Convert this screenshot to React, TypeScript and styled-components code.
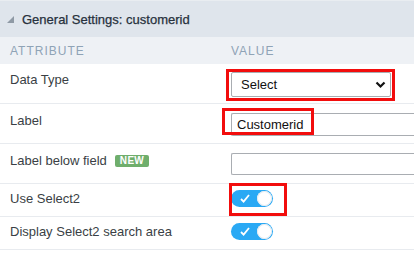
import React from 'react'
import styled, { createGlobalStyle } from 'styled-components'

const GlobalStyle = createGlobalStyle`
  html, body {
    margin: 0;
    padding: 0;
    background: #ffffff;
  }
  body {
    font-family: "Liberation Sans", Arial, sans-serif;
    width: 414px;
    height: 253px;
    overflow: hidden;
  }
`

const Panel = styled.div`
  width: 414px;
  display: flex;
  flex-direction: column;
`

const Header = styled.div`
  height: 36px;
  border-top: 1px solid #e9edf1;
  background: #dfe5ec;
  display: flex;
  align-items: center;
  padding-left: 7px;
  gap: 8px;
`

const HeaderTitle = styled.h3`
  margin: 0;
  font-size: 13px;
  font-weight: normal;
  color: #27313d;
  -webkit-text-stroke: 0.25px #27313d;
`

const ColumnsRow = styled.div`
  height: 27px;
  background: #eef1f5;
  display: grid;
  grid-template-columns: 221px 1fr;
  align-items: center;
  padding-left: 10px;
`

const ColumnTitle = styled.span`
  font-size: 12px;
  letter-spacing: 1px;
  color: #8fa3b6;
  text-transform: uppercase;
`

const Row = styled.div<{ $height: number; $pad: number }>`
  height: ${({ $height }) => $height}px;
  box-sizing: border-box;
  border-bottom: 1px solid #e8ebef;
  display: grid;
  grid-template-columns: 221px 1fr;
  padding: ${({ $pad }) => $pad}px 0 0 10px;
  align-items: start;
`

const LabelCell = styled.div<{ $top: number }>`
  display: flex;
  align-items: center;
  gap: 8px;
  font-size: 13px;
  color: #3a3f45;
  padding-top: ${({ $top }) => $top}px;
`

const Badge = styled.span`
  background: #6fae6c;
  color: #ffffff;
  font-size: 10px;
  font-weight: bold;
  line-height: 12px;
  padding: 0 5px;
  border-radius: 2px;
  letter-spacing: 0.3px;
`

const ValueCell = styled.div`
  display: flex;
  min-width: 0;
`

const Marked = styled.div`
  position: relative;
  display: flex;
`

const Highlight = styled.div<{ $left: number; $top: number; $w: number; $h: number }>`
  position: absolute;
  left: ${({ $left }) => $left}px;
  top: ${({ $top }) => $top}px;
  width: ${({ $w }) => $w}px;
  height: ${({ $h }) => $h}px;
  box-sizing: border-box;
  border: 3px solid #f20d0d;
  pointer-events: none;
`

const SelectBox = styled.div`
  width: 160px;
  height: 25px;
  box-sizing: border-box;
  border: 1px solid #a9adb2;
  border-radius: 2px;
  display: flex;
  align-items: center;
  justify-content: space-between;
  padding: 0 4px 0 9px;
  font-size: 13px;
  color: #111111;
`

const TextBox = styled.div<{ $height: number }>`
  width: 200px;
  height: ${({ $height }) => $height}px;
  box-sizing: border-box;
  border: 1px solid #a9adb2;
  border-right: none;
  border-radius: 2px 0 0 2px;
  display: flex;
  align-items: center;
  padding-left: 5px;
  font-size: 13px;
  color: #111111;
`

const Toggle = styled.div`
  width: 42px;
  height: 17px;
  border-radius: 9px;
  background: #2aa9f4;
  display: flex;
  align-items: center;
  justify-content: space-between;
  padding: 0 1px 0 9px;
  box-sizing: border-box;
`

const Knob = styled.span`
  width: 15px;
  height: 15px;
  border-radius: 50%;
  background: #ffffff;
  box-shadow: inset 0 0 0 1px #e3eaf0;
`

const Chevron = () => (
  <svg width="11" height="8" viewBox="0 0 11 8">
    <path d="M1.5 1.5 L5.5 5.5 L9.5 1.5" fill="none" stroke="#111" strokeWidth="2.2" />
  </svg>
)

const Check = () => (
  <svg width="10" height="9" viewBox="0 0 10 9">
    <path d="M1 5 L3.6 7.6 L9 1" fill="none" stroke="#fff" strokeWidth="1.8" />
  </svg>
)

const Triangle = () => (
  <svg width="7" height="7" viewBox="0 0 7 7">
    <polygon points="7,0 7,7 0,7" fill="#8f9aa5" />
  </svg>
)

const Switch = () => (
  <Toggle>
    <Check />
    <Knob />
  </Toggle>
)

export default function App() {
  return (
    <>
      <GlobalStyle />
      <Panel>
        <Header>
          <Triangle />
          <HeaderTitle>General Settings: customerid</HeaderTitle>
        </Header>
        <ColumnsRow>
          <ColumnTitle>Attribute</ColumnTitle>
          <ColumnTitle>Value</ColumnTitle>
        </ColumnsRow>

        <Row $height={40} $pad={8}>
          <LabelCell $top={0}>Data Type</LabelCell>
          <ValueCell>
            <Marked>
              <SelectBox>
                Select
                <Chevron />
              </SelectBox>
              <Highlight $left={-5} $top={-3} $w={169} $h={32} />
            </Marked>
          </ValueCell>
        </Row>

        <Row $height={40} $pad={9}>
          <LabelCell $top={0}>Label</LabelCell>
          <ValueCell>
            <Marked>
              <TextBox $height={23}>Customerid</TextBox>
              <Highlight $left={-9} $top={-5} $w={92} $h={27} />
            </Marked>
          </ValueCell>
        </Row>

        <Row $height={40} $pad={9}>
          <LabelCell $top={0}>
            Label below field
            <Badge>NEW</Badge>
          </LabelCell>
          <ValueCell>
            <TextBox $height={22} />
          </ValueCell>
        </Row>

        <Row $height={33} $pad={6}>
          <LabelCell $top={1}>Use Select2</LabelCell>
          <ValueCell>
            <Marked>
              <Switch />
              <Highlight $left={-2} $top={-7} $w={58} $h={33} />
            </Marked>
          </ValueCell>
        </Row>

        <Row $height={33} $pad={6}>
          <LabelCell $top={1}>Display Select2 search area</LabelCell>
          <ValueCell>
            <Switch />
          </ValueCell>
        </Row>
      </Panel>
    </>
  )
}
